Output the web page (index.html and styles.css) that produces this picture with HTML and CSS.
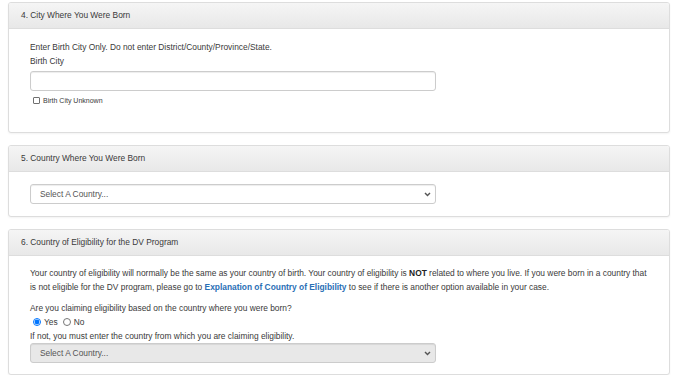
FILE: index.html
```html
<!DOCTYPE html>
<html>
<head>
<meta charset="utf-8">
<link rel="stylesheet" href="styles.css">
</head>
<body>
<div class="page">
  <section class="panel">
    <div class="panel-heading">4. City Where You Were Born</div>
    <div class="panel-body body-city">
      <p class="line">Enter Birth City Only. Do not enter District/County/Province/State.</p>
      <label class="line" for="city">Birth City</label>
      <input class="form-control" id="city" type="text">
      <label class="check"><input type="checkbox" class="cb"><span>Birth City Unknown</span></label>
    </div>
  </section>

  <section class="panel">
    <div class="panel-heading">5. Country Where You Were Born</div>
    <div class="panel-body body-country">
      <div class="select-wrap">
        <div class="form-control select">Select A Country...</div>
        <svg class="chev" width="7" height="5" viewBox="0 0 7 5"><path d="M1 1 L3.5 3.6 L6 1" fill="none" stroke="#555" stroke-width="1.4"/></svg>
      </div>
    </div>
  </section>

  <section class="panel">
    <div class="panel-heading">6. Country of Eligibility for the DV Program</div>
    <div class="panel-body body-elig">
      <p class="para">Your country of eligibility will normally be the same as your country of birth. Your country of eligibility is <b>NOT</b> related to where you live. If you were born in a country that is not eligible for the DV program, please go to <a href="#">Explanation of Country of Eligibility</a> to see if there is another option available in your case.</p>
      <p class="line">Are you claiming eligibility based on the country where you were born?</p>
      <div class="radios">
        <label class="radio"><input type="radio" name="elig" checked><span>Yes</span></label>
        <label class="radio"><input type="radio" name="elig"><span>No</span></label>
      </div>
      <p class="line">If not, you must enter the country from which you are claiming eligibility.</p>
      <div class="select-wrap">
        <div class="form-control select disabled">Select A Country...</div>
        <svg class="chev" width="7" height="5" viewBox="0 0 7 5"><path d="M1 1 L3.5 3.6 L6 1" fill="none" stroke="#555" stroke-width="1.4"/></svg>
      </div>
    </div>
  </section>
</div>
</body>
</html>
```
FILE: styles.css
```css
html, body {
  margin: 0;
  padding: 0;
  background: #fff;
}
body {
  font-family: "Liberation Sans", Arial, sans-serif;
  font-size: 8.4px;
  color: #3a3a3a;
}
.page {
  padding: 2px 10px 0 8px;
  display: flex;
  flex-direction: column;
  gap: 12px;
}
.panel {
  border: 1px solid #ddd;
  border-radius: 3px;
  box-shadow: 0 1px 2px rgba(0,0,0,0.05);
  background: #fff;
}
.panel-heading {
  height: 25px;
  line-height: 25px;
  padding: 0 12px;
  border-bottom: 1px solid #ddd;
  background: linear-gradient(to bottom, #f5f5f5 0, #e8e8e8 100%);
  border-radius: 2px 2px 0 0;
  font-size: 8.4px;
}
.panel-body {
  padding: 0 21px;
  display: flex;
  flex-direction: column;
  align-items: flex-start;
}
.body-city { padding-top: 11px; padding-bottom: 26px; }
.body-country { padding-top: 12px; padding-bottom: 12px; }
.body-elig { padding-top: 10px; padding-bottom: 11px; }
.line, .para {
  margin: 0;
  line-height: 14px;
  display: block;
}
.para { margin-bottom: 7px; }
.para a {
  color: #2a6fb5;
  font-weight: bold;
  text-decoration: none;
}
.para b { color: #222; }
.form-control {
  box-sizing: border-box;
  width: 406px;
  height: 20px;
  border: 1px solid #ccc;
  border-radius: 3px;
  background: #fff;
  box-shadow: inset 0 1px 1px rgba(0,0,0,0.075);
  font: inherit;
  padding: 0 9px;
  margin: 3px 0 0;
}
.select-wrap {
  position: relative;
  width: 406px;
}
.select {
  margin: 0;
  line-height: 18px;
  color: #555;
}
.select.disabled {
  background: #e8e8e8;
}
.chev {
  position: absolute;
  right: 5px;
  top: 8px;
}
.check {
  display: flex;
  align-items: center;
  height: 12px;
  margin-top: 3px;
  font-size: 7px;
}
.check .cb {
  appearance: none;
  -webkit-appearance: none;
  box-sizing: border-box;
  width: 7px;
  height: 7px;
  margin: 0 3px 0 3px;
  border: 1px solid #707070;
  border-radius: 1px;
  background: #fff;
}
.radios {
  display: flex;
  align-items: center;
  height: 14px;
  gap: 2px;
}
.radio {
  display: flex;
  align-items: center;
}
.radio input {
  width: 8px;
  height: 8px;
  margin: 0 3px 0 3px;
}
```
